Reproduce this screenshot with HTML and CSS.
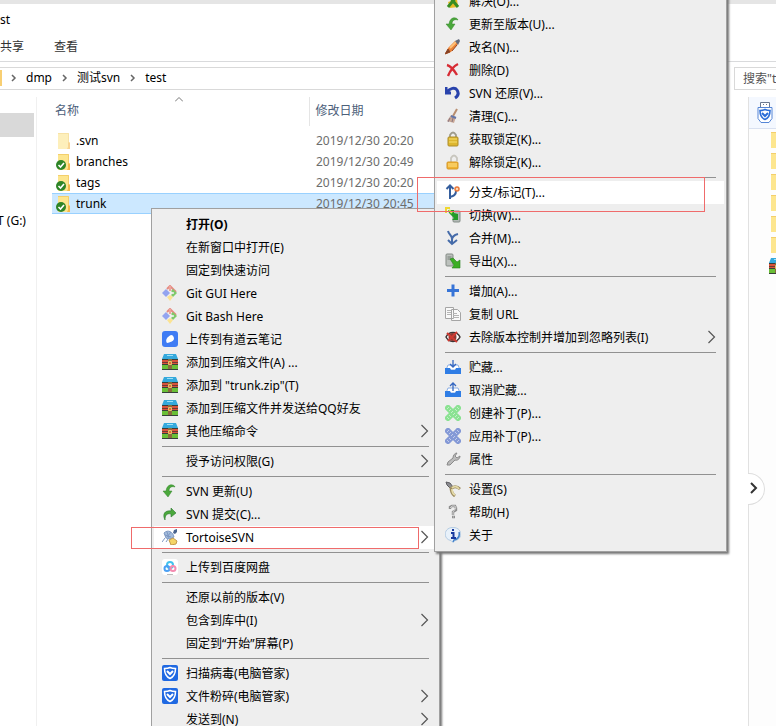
FILE: index.html
```html
<!DOCTYPE html>
<html lang="zh-CN">
<head>
    <meta charset="UTF-8">
    <title>test</title>
    <link rel="stylesheet" href="styles.css">
</head>
<body>
    <!-- Shared icons -->
    <svg class="sprite" aria-hidden="true">
        <symbol id="folder" viewBox="0 0 16 16">
            <path d="M2 0h11v9h1v7H2z" fill="#fde68f"/>
            <path d="M2 .5h10.500v9" fill="none" stroke="#f3cf6c"/>
            <path d="M12 9l2 1v6h-3l1-2z" fill="#f5b94c"/>
        </symbol>
        <symbol id="folder-svn" viewBox="0 0 16 16">
            <use href="#folder"/>
            <circle cx="5" cy="11" r="5" fill="#2e8527"/>
            <path d="M2.500 11l2 2 3.500-4" fill="none" stroke="#fff" stroke-width="1.600"/>
        </symbol>
        <symbol id="git" viewBox="0 0 16 16">
            <path d="M5 4l3-3 6 6" fill="none" stroke="#e58b82" stroke-width="2"/>
            <path d="M8 1v5" stroke="#eda49c" stroke-width="2"/>
            <path d="M0 8l4-4 4 4-4 4z" fill="#93a4f0"/>
            <path d="M11 4l4 4-4 4-2-2 2-2-2-2z" fill="#7fc96a"/>
            <circle cx="11" cy="8" r="1" fill="#eee"/>
            <path d="M5 12l3-2 3 2-3 4z" fill="#fbe392"/>
        </symbol>
        <symbol id="note" viewBox="0 0 16 16">
            <rect width="16" height="16" rx="3" fill="#3f7cf4"/>
            <path d="M5 12c-2-3 0-6 4-8 2 0 3 2 3 4-1 3-4 3-7 4z" fill="#fff"/>
        </symbol>
        <symbol id="rar" viewBox="0 0 16 16">
            <path d="M2 0h12l2 5H0z" fill="#35a9dc"/>
            <path d="M5 1h6v1H5z" fill="#9be0f8"/>
            <path d="M0 5h16v1H0zM0 10h16v1H0zM0 15h16v1H0z" fill="#37413a"/>
            <path d="M0 6h16v4H0z" fill="#d9533b"/>
            <path d="M0 11h16v4H0z" fill="#6abf36"/>
            <path d="M0 8h16v1H0z" fill="#6d3b33"/>
            <path d="M6 5h4v10H6z" fill="#8a6b3d"/>
            <path d="M6.500 7.500h3v3h-3z" fill="#e9643a" stroke="#e0c468"/>
        </symbol>
        <symbol id="update" viewBox="0 0 16 16">
            <path d="M13 4c-1-3-8-4-9 4H1l5 6 4-6H7c0-4 3-5 6-4z" fill="#4ba83c" stroke="#39872f" stroke-width=".5"/>
        </symbol>
        <symbol id="commit" viewBox="0 0 16 16">
            <path d="M3 14C0 8 3 4 9 5V2l5 5-5 4V8c-4-1-6 1-6 6z" fill="#4ba83c" stroke="#2c7931" stroke-width=".6"/>
        </symbol>
        <symbol id="tortoise" viewBox="0 0 16 16">
            <path d="M2 4c4-4 9-1 10 4l-4 2-4-1z" fill="#a3bbdb" stroke="#7d98c2"/>
            <path d="M3 6l6 2M5 3l2 6M9 3L5 8M3 9l-3 4M6 10l-2 3" stroke="#7d98c2"/>
            <path d="M11 4l1-3 3-1v3l-2 2z" fill="#4a648e"/>
            <path d="M7 11l4-2 4 3-1 3-5 1z" fill="#f4d467" stroke="#c39a4c"/>
        </symbol>
        <symbol id="cloud" viewBox="0 0 16 16">
            <rect width="16" height="16" rx="3" fill="#fff"/>
            <circle cx="8" cy="6" r="3" fill="none" stroke="#42c2ee" stroke-width="2"/>
            <circle cx="5" cy="9.500" r="2.500" fill="none" stroke="#4aa0f4" stroke-width="2"/>
            <circle cx="11" cy="9.500" r="2.500" fill="none" stroke="#f48bb0" stroke-width="2"/>
            <path d="M5 15.500h6" stroke="#bbb"/>
        </symbol>
        <symbol id="shield" viewBox="0 0 16 16">
            <rect width="16" height="16" rx="2" fill="#2069e2"/>
            <path d="M2.500 3.500C5 3.500 7 3 8 2.500c1 .5 3 1 5.500 1 0 5-1 8-5.500 10-4.500-2-5.500-5-5.500-10z" fill="none" stroke="#fff" stroke-width="1.500"/>
            <path d="M5 6l3 3 3-3" fill="none" stroke="#fff" stroke-width="2"/>
        </symbol>
        <symbol id="resolve" viewBox="0 0 16 16">
            <path d="M3 9l9-3 1 8-8 1z" fill="#e8bc27"/>
            <path d="M4 3l9 11M12 3L3 14" stroke="#388d23" stroke-width="3"/>
        </symbol>
        <symbol id="rename" viewBox="0 0 16 16">
            <path d="M1 15l2-6 7-7 3 3-7 8z" fill="#e98238"/>
            <path d="M5 9l7-7" stroke="#ffc279" stroke-width="2"/>
            <path d="M10 2l4-2 1 2-2 4z" fill="#656b7d"/>
            <path d="M0 15l3-5 2 3zM7 12l5-6" fill="#7b412c" stroke="#944521"/>
        </symbol>
        <symbol id="delete" viewBox="0 0 16 16">
            <path d="M2 3c4 1 7 5 10 10M13 2C9 4 5 9 3 14" fill="none" stroke="#d72c35" stroke-width="2.400"/>
        </symbol>
        <symbol id="revert" viewBox="0 0 16 16">
            <path d="M1 2v6h5M2 7c3-4 8-5 10-2 2 3 1 6-2 8" fill="none" stroke="#2943ac" stroke-width="3"/>
        </symbol>
        <symbol id="clean" viewBox="0 0 16 16">
            <path d="M8 8l4-7" stroke="#b98e6f" stroke-width="2"/>
            <path d="M6 7l5 2-2 6-7-2z" fill="#c9a896"/>
            <path d="M6 8l5 2" stroke="#6376aa" stroke-width="2"/>
            <path d="M5 10l-2 4M8 10l-1 4" stroke="#8a7480"/>
        </symbol>
        <symbol id="lock" viewBox="0 0 16 16">
            <path d="M5 7V4q3-5 6 0v3" fill="none" stroke="#9f9c8d" stroke-width="1.800"/>
            <rect x="3" y="6" width="10" height="9" rx="1" fill="#ddb62f" stroke="#ae8d2a"/>
            <path d="M4 8h8M4 11h8" stroke="#f7df70"/>
        </symbol>
        <symbol id="unlock" viewBox="0 0 16 16">
            <path d="M6 8V4q3-5 6 0v3" fill="none" stroke="#c8c6be" stroke-width="1.800"/>
            <rect x="2" y="8" width="11" height="7" rx="1" fill="#f0b332" stroke="#d59626"/>
            <path d="M3 10h9M3 12h9" stroke="#ffe38c"/>
        </symbol>
        <symbol id="branch" viewBox="0 0 16 16">
            <path d="M5 15V2M1.500 5L5 1.500 8.500 5M5 13c5-1 6-3 6-6" fill="none" stroke="#355e9d" stroke-width="2"/>
            <circle cx="12" cy="5" r="2" fill="#fbd8b3" stroke="#e87739" stroke-width="1.500"/>
        </symbol>
        <symbol id="switch" viewBox="0 0 16 16">
            <rect x="8" y="4" width="7" height="11" rx="1" fill="#b4bbb7" stroke="#838c87"/>
            <path d="M1 6V1h4" fill="none" stroke="#efd72f" stroke-width="2"/>
            <path d="M3 3h6v3l4 1v6H7l2-2-5-5z" fill="#229c28"/>
            <path d="M4 3l3 3" stroke="#d2e94f" stroke-width="2"/>
        </symbol>
        <symbol id="merge" viewBox="0 0 16 16">
            <path d="M3 1c1 4 4 4 4 8v5M13 4c-4 1-6 3-6 6M3 10l4 4 5-4" fill="none" stroke="#456ba9" stroke-width="2"/>
        </symbol>
        <symbol id="export" viewBox="0 0 16 16">
            <rect x="1" y="1" width="7" height="12" rx="1" fill="#bcc1bd" stroke="#848b86"/>
            <path d="M2.500 4h4M2.500 6h4" stroke="#777e79"/>
            <path d="M5 6l3-1 4 4 3-2v8H7l2-3z" fill="#3cae25" stroke="#26801c" stroke-width=".6"/>
        </symbol>
        <symbol id="add" viewBox="0 0 16 16">
            <path d="M8 1.500v12M2 7.500h12" stroke="#3774d7" stroke-width="3"/>
        </symbol>
        <symbol id="copy" viewBox="0 0 16 16">
            <path d="M.5 1.500h8v11h-8zM6.500 3.500h6l3 3v8h-9z" fill="#f9f9f9" stroke="#a5a5a5"/>
            <path d="M2 4.500h4M2 6.500h4M2 8.500h4M8 7.500h4M8 9.500h6M8 11.500h6" stroke="#b5b5b5"/>
        </symbol>
        <symbol id="ignore" viewBox="0 0 16 16">
            <path d="M1 8c3-6 11-6 14 0-3 6-11 6-14 0z" fill="#fff" stroke="#3e3434" stroke-width="1.500"/>
            <circle cx="7.500" cy="8" r="4" fill="#8e3a34"/>
            <path d="M2 4l10 9M12 3L3 12" stroke="#cf3a32" stroke-width="2"/>
        </symbol>
        <symbol id="tray" viewBox="0 0 16 16">
            <path d="M3 6h10l2 5H1z" fill="#fff" stroke="#8aaee5"/>
            <path d="M0 9h5l1 2h4l1-2h5v6H0z" fill="#2f7de5"/>
        </symbol>
        <symbol id="stash" viewBox="0 0 16 16">
            <use href="#tray"/>
            <path d="M8 1v7M5 5l3 3 3-3" fill="none" stroke="#3567c0" stroke-width="1.300"/>
        </symbol>
        <symbol id="unstash" viewBox="0 0 16 16">
            <use href="#tray"/>
            <path d="M8 9V1M5 4l3-3 3 3" fill="none" stroke="#3567c0" stroke-width="1.300"/>
        </symbol>
        <symbol id="patch" viewBox="0 0 16 16">
            <path d="M3 3l10 10M13 3L3 13" stroke="currentColor" stroke-width="6" stroke-linecap="round"/>
            <path d="M2 4l2-2M4 6l2-2M10 12l2-2M12 14l2-2M12 2l2 2M2 12l2 2M6 8l2-2M8 10l2-2M10 4l2 2M4 10l2 2" stroke="#fff" stroke-opacity=".5"/>
        </symbol>
        <symbol id="wrench" viewBox="0 0 16 16">
            <path d="M2 14l1-3 5-4c0-3 2-5 4-5l-2 3 2 2 3-2c0 3-3 5-5 4l-5 5z" fill="#bbb" stroke="#8a8a8a"/>
        </symbol>
        <symbol id="settings" viewBox="0 0 16 16">
            <path d="M1 1l4 1 3 4-2 2-4-4z" fill="#8d8d92" stroke="#5c5c60"/>
            <path d="M6 8c2-3 6-3 9 0M6 6c0 5 1 7 4 9" fill="none" stroke="#9c8b60" stroke-width="3"/>
            <path d="M7 7c2-2 5-2 7 1M7 8c0 3 1 5 3 6" fill="none" stroke="#e5dba8" stroke-width="1.800"/>
        </symbol>
        <symbol id="help" viewBox="0 0 16 16">
            <path d="M5 5V3l2-1h3l1 2v2L8 8v3M7 13h3" fill="none" stroke="#8f8f8f" stroke-width="2.400"/>
            <path d="M5 4l2-2h3l1 2-3 4v3M8 13h1" fill="none" stroke="#ddd" stroke-width=".8"/>
        </symbol>
        <symbol id="about" viewBox="0 0 16 16">
            <path d="M8 .5c10 0 10 12 2 13l-2 2-2-2c-8-1-8-13 2-13z" fill="#e8f1fa" stroke="#b4cbe2"/>
            <path d="M14 5c1 4-1 7-5 8l-1 2" fill="none" stroke="#4784cb" stroke-width="1.500"/>
            <path d="M8 2v2M6 6h2.500v5M6 11h5" fill="none" stroke="#173a9f" stroke-width="2"/>
        </symbol>
        <symbol id="arrow" viewBox="0 0 8 14">
            <path d="M.5 1l6 6-6 6" fill="none" stroke="#555" stroke-width="1.200"/>
        </symbol>
        <symbol id="crumb" viewBox="0 0 6 8">
            <path d="M1 1l3 3-3 3" fill="none" stroke="#666" stroke-width="1.500"/>
        </symbol>
    </svg>

    <div class="window">
        <header>
            <div class="title">st</div>
            <nav class="tabs">
                <a href="#">共享</a>
                <a href="#">查看</a>
            </nav>
            <div class="toolbar">
                <nav class="address">
                    <span class="address-folder"></span>
                    <svg class="crumb"><use href="#crumb"/></svg>
                    <a href="#">dmp</a>
                    <svg class="crumb"><use href="#crumb"/></svg>
                    <a href="#">测试svn</a>
                    <svg class="crumb"><use href="#crumb"/></svg>
                    <a href="#">test</a>
                </nav>
                <input class="search" type="text" aria-label="搜索" placeholder='搜索"test"'>
            </div>
        </header>

        <div class="content">
            <nav class="tree">
                <div class="tree-selected"></div>
                <a href="#">T (G:)</a>
            </nav>
            <main>
                <svg class="sort" viewBox="0 0 8 5"><path d="M0 4.500l4-4 4 4" fill="none" stroke="#777"/></svg>
                <table class="files">
                    <thead>
                        <tr><th class="name">名称</th><th>修改日期</th></tr>
                    </thead>
                    <tbody>
                        <tr><td class="name"><svg class="icon faded"><use href="#folder"/></svg>.svn</td><td>2019/12/30 20:20</td></tr>
                        <tr><td class="name"><svg class="icon"><use href="#folder-svn"/></svg>branches</td><td>2019/12/30 20:49</td></tr>
                        <tr><td class="name"><svg class="icon"><use href="#folder-svn"/></svg>tags</td><td>2019/12/30 20:20</td></tr>
                        <tr class="selected"><td class="name"><svg class="icon"><use href="#folder-svn"/></svg>trunk</td><td>2019/12/30 20:45</td></tr>
                    </tbody>
                </table>
            </main>
            <aside>
                <div class="aside-head">
                    <svg viewBox="0 0 16 22" width="16" height="22">
                        <path d="M3.500 5V.5h9V5" fill="#fff" stroke="#6b7890"/>
                        <path d="M6 2.500h1M9 2.500h1" stroke="#6b7890"/>
                        <path d="M1 5.500h14v11l-3 4H4l-3-4z" fill="#fff" stroke="#5485d6"/>
                        <path d="M3 8.500q3 0 5-1 2 1 5 1 0 7-5 9-5-2-5-9z" fill="none" stroke="#2c6ed8" stroke-width="1.600"/>
                        <path d="M5 11l3 3 3-3" fill="none" stroke="#2c6ed8" stroke-width="2"/>
                    </svg>
                </div>
                <div class="aside-list">
                    <svg class="icon"><use href="#folder"/></svg>
                    <svg class="icon"><use href="#folder"/></svg>
                    <svg class="icon"><use href="#folder"/></svg>
                    <svg class="icon"><use href="#folder"/></svg>
                    <svg class="icon"><use href="#folder"/></svg>
                    <svg class="icon"><use href="#folder"/></svg>
                    <svg class="icon"><use href="#rar"/></svg>
                </div>
                <button class="expand" aria-label="展开"><svg viewBox="0 0 8 12" width="8" height="12"><path d="M1 1l5 5-5 5" fill="none" stroke="#333" stroke-width="2"/></svg></button>
            </aside>
        </div>

        <!-- Explorer context menu -->
        <div class="menu context-menu">
            <button class="default"><span class="icon"></span>打开(O)</button>
            <button><span class="icon"></span>在新窗口中打开(E)</button>
            <button><span class="icon"></span>固定到快速访问</button>
            <button><svg class="icon"><use href="#git"/></svg>Git GUI Here</button>
            <button><svg class="icon"><use href="#git"/></svg>Git Bash Here</button>
            <button><svg class="icon"><use href="#note"/></svg>上传到有道云笔记</button>
            <button><svg class="icon"><use href="#rar"/></svg>添加到压缩文件(A) ...</button>
            <button><svg class="icon"><use href="#rar"/></svg>添加到 "trunk.zip"(T)</button>
            <button><svg class="icon"><use href="#rar"/></svg>添加到压缩文件并发送给QQ好友</button>
            <button><svg class="icon"><use href="#rar"/></svg>其他压缩命令<svg class="arrow"><use href="#arrow"/></svg></button>
            <hr>
            <button><span class="icon"></span>授予访问权限(G)<svg class="arrow"><use href="#arrow"/></svg></button>
            <hr>
            <button><svg class="icon"><use href="#update"/></svg>SVN 更新(U)</button>
            <button><svg class="icon"><use href="#commit"/></svg>SVN 提交(C)...</button>
            <button class="active"><svg class="icon"><use href="#tortoise"/></svg>TortoiseSVN<svg class="arrow"><use href="#arrow"/></svg></button>
            <hr>
            <button><svg class="icon"><use href="#cloud"/></svg>上传到百度网盘</button>
            <hr>
            <button><span class="icon"></span>还原以前的版本(V)</button>
            <button><span class="icon"></span>包含到库中(I)<svg class="arrow"><use href="#arrow"/></svg></button>
            <button><span class="icon"></span>固定到“开始”屏幕(P)</button>
            <hr>
            <button><svg class="icon"><use href="#shield"/></svg>扫描病毒(电脑管家)</button>
            <button><svg class="icon"><use href="#shield"/></svg>文件粉碎(电脑管家)<svg class="arrow"><use href="#arrow"/></svg></button>
            <button><span class="icon"></span>发送到(N)<svg class="arrow"><use href="#arrow"/></svg></button>
        </div>

        <!-- TortoiseSVN submenu -->
        <div class="menu svn-menu">
            <button><svg class="icon"><use href="#resolve"/></svg>解决(O)...</button>
            <button><svg class="icon"><use href="#update"/></svg>更新至版本(U)...</button>
            <button><svg class="icon"><use href="#rename"/></svg>改名(N)...</button>
            <button><svg class="icon"><use href="#delete"/></svg>删除(D)</button>
            <button><svg class="icon"><use href="#revert"/></svg>SVN 还原(V)...</button>
            <button><svg class="icon"><use href="#clean"/></svg>清理(C)...</button>
            <button><svg class="icon"><use href="#lock"/></svg>获取锁定(K)...</button>
            <button><svg class="icon"><use href="#unlock"/></svg>解除锁定(K)...</button>
            <hr>
            <button class="active"><svg class="icon"><use href="#branch"/></svg>分支/标记(T)...</button>
            <button><svg class="icon"><use href="#switch"/></svg>切换(W)...</button>
            <button><svg class="icon"><use href="#merge"/></svg>合并(M)...</button>
            <button><svg class="icon"><use href="#export"/></svg>导出(X)...</button>
            <hr>
            <button><svg class="icon"><use href="#add"/></svg>增加(A)...</button>
            <button><svg class="icon"><use href="#copy"/></svg>复制 URL</button>
            <button><svg class="icon"><use href="#ignore"/></svg>去除版本控制并增加到忽略列表(I)<svg class="arrow"><use href="#arrow"/></svg></button>
            <hr>
            <button><svg class="icon"><use href="#stash"/></svg>贮藏...</button>
            <button><svg class="icon"><use href="#unstash"/></svg>取消贮藏...</button>
            <button><svg class="icon green"><use href="#patch"/></svg>创建补丁(P)...</button>
            <button><svg class="icon blue"><use href="#patch"/></svg>应用补丁(P)...</button>
            <button><svg class="icon"><use href="#wrench"/></svg>属性</button>
            <hr>
            <button><svg class="icon"><use href="#settings"/></svg>设置(S)</button>
            <button><svg class="icon"><use href="#help"/></svg>帮助(H)</button>
            <button><svg class="icon"><use href="#about"/></svg>关于</button>
        </div>

        <div class="mark mark-tortoise"></div>
        <div class="mark mark-branch"></div>
    </div>
</body>
</html>
```
FILE: styles.css
```css
* {
    box-sizing: border-box;
}

body {
    margin: 0;
    font-family: "Noto Sans", "Noto Sans CJK SC", sans-serif;
    font-size: 12px;
    line-height: 20px;
    color: #000;
    background-color: #fff;
}

a {
    color: inherit;
    text-decoration: none;
}

button, input {
    font: inherit;
    color: inherit;
}

.sprite {
    position: absolute;
    width: 0;
    height: 0;
}

.icon {
    flex: none;
    width: 16px;
    height: 16px;
}

.window {
    position: relative;
    display: flex;
    flex-direction: column;
    height: 100vh;
    overflow: hidden;
}

/* Title, ribbon tabs and address bar */
header {
    border-top: 4px solid #e5e5e5;
}

.title {
    padding: 6px 0 7px;
}

.tabs {
    display: flex;
    gap: 30px;
    height: 25px;
    color: #333;
    border-bottom: 1px solid #d9dadc;
}

.toolbar {
    display: flex;
    gap: 12px;
    padding: 5px 0 7px;
}

.address {
    flex: 1;
    display: flex;
    align-items: center;
    height: 23px;
    padding-bottom: 1px;
    border: 1px solid #d9d9d9;
    border-left: none;
}

.address a {
    margin-right: 10px;
}

.address-folder {
    width: 2px;
    height: 16px;
    margin-right: 9px;
    background-color: #f8cf73;
}

.crumb {
    width: 6px;
    height: 8px;
    margin-right: 9px;
}

.search {
    width: 200px;
    height: 23px;
    margin-right: -158px;
    padding: 0 8px;
    border: 1px solid #d9d9d9;
}

.search::placeholder {
    color: #555;
    opacity: 1;
}

/* Folder tree, file list and preview pane */
.content {
    flex: 1;
    display: flex;
}

.tree {
    width: 37px;
    padding-top: 16px;
    border-right: 1px solid #f0f0f0;
    white-space: nowrap;
}

.tree-selected {
    width: 34px;
    height: 24px;
    margin-bottom: 74px;
    background-color: #d9d9d9;
}

.tree a {
    margin-left: -3px;
}

main {
    position: relative;
    flex: 1;
    padding: 0 24px 0 15px;
}

.sort {
    position: absolute;
    top: 0;
    left: 138px;
    width: 8px;
    height: 5px;
}

.files {
    width: 100%;
    border-collapse: collapse;
}

.files th {
    height: 29px;
    padding: 0 6px 2px;
    border-left: 1px solid #e5e5e5;
    font-weight: normal;
    text-align: left;
    color: #4c607a;
}

.files th.name {
    width: 257px;
    padding-left: 3px;
    border-left: none;
}

.files tbody::before {
    content: "";
    display: block;
    height: 4px;
}

.files td {
    height: 21px;
    padding: 0 7px;
    color: #6d6d6d;
}

.files td.name {
    padding-left: 4px;
    color: #000;
}

.files .icon {
    margin-right: 4px;
    vertical-align: middle;
}

.files .faded {
    opacity: 0.6;
}

.files .selected td {
    background-color: #cce8ff;
    box-shadow: inset 0 1px #99d1ff, inset 0 -1px #99d1ff;
}

aside {
    position: relative;
    width: 28px;
    border-left: 1px solid #e1e1e1;
    background-color: #fdfdfd;
}

.aside-head {
    height: 32px;
    padding: 5px 0 0 8px;
    background-color: #f4f8ff;
    border-bottom: 1px solid #d9e1f1;
}

.aside-list {
    display: flex;
    flex-direction: column;
    gap: 5px;
    padding: 3px 0 0 20px;
}

.expand {
    position: absolute;
    top: 376px;
    left: -1px;
    width: 17px;
    height: 32px;
    padding: 2px 4px 0 0;
    border: 1px solid #ddd;
    border-left: none;
    border-radius: 0 16px 16px 0;
    background-color: #fff;
}

/* Menus */
.menu {
    position: absolute;
    padding: 4px 2px;
    background-color: #eee;
    border: 1px solid #a0a0a0;
    box-shadow: 2px 2px 2px #777;
}

.menu button {
    display: flex;
    align-items: center;
    gap: 8px;
    width: 100%;
    height: 23px;
    padding: 0 8px;
    border: none;
    background: none;
    text-align: left;
    white-space: nowrap;
}

.menu button.active {
    background-color: #fff;
}

.menu button.default {
    font-weight: bold;
}

.menu hr {
    height: 1px;
    margin: 3px 8px;
    border: none;
    background-color: #919191;
}

.menu .icon {
    margin-bottom: 1px;
}

.menu .arrow {
    width: 8px;
    height: 14px;
    margin: 0 0 1px auto;
}

.context-menu {
    top: 208px;
    left: 151px;
    width: 289px;
}

.svn-menu {
    top: -15px;
    left: 434px;
    width: 293px;
}

.green {
    color: #8be292;
}

.blue {
    color: #8499d6;
}

/* Red highlight boxes */
.mark {
    position: absolute;
    border: 1px solid #ef6b6b;
}

.mark-tortoise {
    top: 527px;
    left: 131px;
    width: 288px;
    height: 22px;
}

.mark-branch {
    top: 177px;
    left: 417px;
    width: 288px;
    height: 35px;
}
```
